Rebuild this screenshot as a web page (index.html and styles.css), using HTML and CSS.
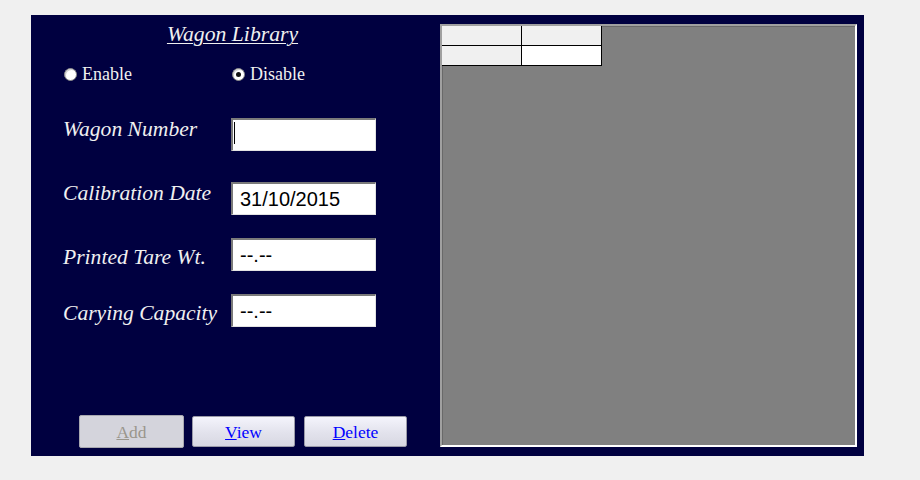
FILE: index.html
```html
<!DOCTYPE html>
<html>
<head>
<meta charset="utf-8">
<link rel="stylesheet" href="styles.css">
</head>
<body>
<div class="window">
  <div class="form">
    <div class="title"><span>Wagon Library</span></div>
    <div class="radios">
      <label class="radio"><span class="dot"></span>Enable</label>
      <label class="radio"><span class="dot checked"></span>Disable</label>
    </div>
    <div class="row first">
      <div class="lbl">Wagon Number</div>
      <div class="field focused"><input type="text" value=""></div>
    </div>
    <div class="row second">
      <div class="lbl">Calibration Date</div>
      <div class="field"><input type="text" value="31/10/2015"></div>
    </div>
    <div class="row low">
      <div class="lbl">Printed Tare Wt.</div>
      <div class="field"><input type="text" value="--.--"></div>
    </div>
    <div class="row low">
      <div class="lbl">Carying Capacity</div>
      <div class="field"><input type="text" value="--.--"></div>
    </div>
    <div class="buttons">
      <button class="btn disabled"><u>A</u>dd</button>
      <button class="btn"><u>V</u>iew</button>
      <button class="btn"><u>D</u>elete</button>
    </div>
  </div>
  <div class="grid-panel">
    <table class="grid">
      <tr><td class="hdr"></td><td class="hdr"></td></tr>
      <tr><td class="hdr"></td><td class="cell"></td></tr>
    </table>
  </div>
</div>
</body>
</html>
```
FILE: styles.css
```css
html, body {
  margin: 0;
  padding: 0;
  background: #f0f0f0;
}
body {
  width: 920px;
  height: 480px;
  overflow: hidden;
  font-family: "Liberation Serif", "Times New Roman", serif;
}
.window {
  margin: 15px 0 0 31px;
  width: 833px;
  height: 441px;
  background: #000040;
  display: flex;
}
.form {
  width: 409px;
  display: flex;
  flex-direction: column;
  color: #f0f0f0;
}
.title {
  padding: 7px 6px 0 0;
  text-align: center;
  font-size: 21.7px;
  font-style: italic;
  line-height: 24px;
}
.title span {
  text-decoration: underline;
  text-decoration-thickness: 1px;
  text-underline-offset: 2px;
}
.radios {
  margin-top: 18px;
  padding-left: 33px;
  display: flex;
  height: 20px;
  align-items: center;
  font-size: 18px;
}
.radio {
  display: flex;
  align-items: center;
  width: 168px;
}
.dot {
  width: 11px;
  height: 11px;
  border-radius: 50%;
  background: #fff;
  border: 1px solid #8a8a8a;
  box-shadow: inset 1px 1px 0 #d0d0d0;
  margin-right: 5px;
  margin-top: 1px;
  position: relative;
  box-sizing: content-box;
  flex: none;
}
.dot.checked::after {
  content: "";
  position: absolute;
  left: 3px;
  top: 3px;
  width: 5px;
  height: 5px;
  border-radius: 50%;
  background: #111;
}
.row {
  display: flex;
  align-items: flex-start;
  padding-left: 32px;
}
.row.first { margin-top: 34px; }
.row.second { margin-top: 31px; }
.row.low { margin-top: 23px; }
.lbl {
  width: 168px;
  font-size: 21.6px;
  font-style: italic;
  line-height: 22px;
  white-space: nowrap;
}
.row.low .lbl { margin-top: 8px; }
.field {
  position: relative;
}
.field input {
  display: block;
  box-sizing: border-box;
  width: 145px;
  height: 33px;
  margin: 0;
  padding: 0 0 0 7px;
  border-style: solid;
  border-width: 2px 1px 1px 2px;
  border-color: #7a7a7a #e3e3e3 #e3e3e3 #7a7a7a;
  background: #fff;
  font-family: "Liberation Sans", Arial, sans-serif;
  font-size: 20px;
  color: #000;
  outline: none;
}
.field.focused::after {
  content: "";
  position: absolute;
  left: 3px;
  top: 4px;
  width: 1px;
  height: 22px;
  background: #000;
}
.buttons {
  margin-top: auto;
  margin-bottom: 8px;
  padding-left: 48px;
  display: flex;
  align-items: center;
  height: 33px;
}
.btn {
  box-sizing: border-box;
  width: 103px;
  height: 31px;
  margin: 0 9px 0 0;
  padding: 0;
  border: 1px solid #9a9aa8;
  border-radius: 2px;
  background: linear-gradient(#f4f4fc, #e2e2ec 55%, #d8d8e2);
  color: #0000ff;
  font-family: "Liberation Serif", "Times New Roman", serif;
  font-size: 17.5px;
  line-height: 20px;
}
.btn:first-child {
  margin-right: 8px;
}
.btn.disabled {
  width: 105px;
  height: 33px;
  background: #d4d4dc;
  border-color: #a8a8b0;
  color: #9a968c;
}
.grid-panel {
  margin: 9px 7px 9px 0;
  flex: 1;
  background: #808080;
  border-style: solid;
  border-width: 2px;
  border-color: #a0a0a0 #ffffff #ffffff #a0a0a0;
  box-shadow: inset 1px 1px 0 #696969;
}
.grid {
  border-collapse: separate;
  border-spacing: 0;
}
.grid td {
  box-sizing: border-box;
  width: 80px;
  height: 20px;
  padding: 0;
  border-right: 1px solid #000;
  border-bottom: 1px solid #000;
  background: #f0f0f0;
}
.grid td.cell {
  background: #fff;
}
```
